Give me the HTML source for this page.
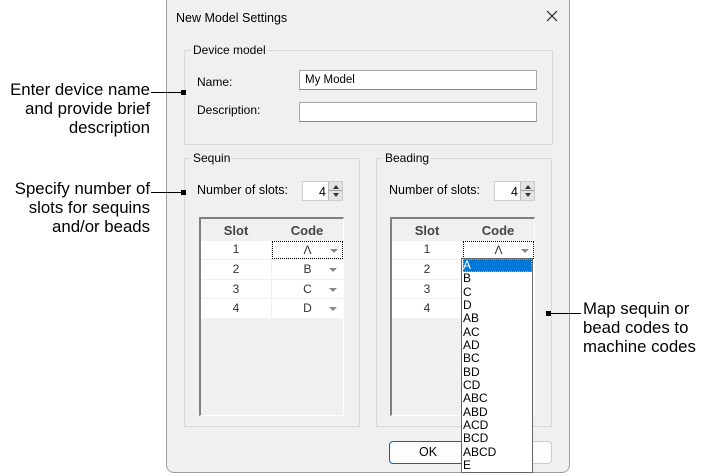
<!DOCTYPE html>
<html><head><style>
*{margin:0;padding:0;box-sizing:border-box}
body{width:706px;height:476px;background:#fff;position:relative;overflow:hidden;font-family:"Liberation Sans",Arial,sans-serif;}
.a{position:absolute}
.ann{position:absolute;font-size:16.8px;line-height:19px;color:#000}
.dlg{position:absolute;left:166px;top:0;width:404px;height:473px;background:#f0f0f0;border:1px solid #a0a0a0;border-top:none;border-radius:0 0 8px 8px}
.in{position:absolute;left:-1px;top:0;width:404px;height:473px}
.t{font-size:12px;color:#000;position:absolute;white-space:nowrap}
.grp{position:absolute;border:1px solid #d8d8d8}
.gl{position:absolute;background:#f0f0f0;padding:0 2px;font-size:12px;top:-8px;left:6px}
.inp{position:absolute;background:#fff;border:1px solid #a8a8a8;border-bottom-color:#888}
.grid{position:absolute;background:#f0f0f0;border-top:2px solid #808080;border-left:2px solid #808080;border-right:1px solid #fff;border-bottom:1px solid #fff}
.cell{position:absolute;background:#fff;font-size:12px;text-align:center;color:#333}
.hdr{position:absolute;font-size:13px;font-weight:bold;color:#444;text-align:center}
.arr{position:absolute;width:0;height:0;border-left:4px solid transparent;border-right:4px solid transparent;border-top:4px solid #888}
.ln{z-index:5}
</style></head><body>
<div class="ann" style="right:556px;top:80px;text-align:right">Enter device name<br>and provide brief<br>description</div>
<div class="ann" style="right:556px;top:179px;text-align:right">Specify number of<br>slots for sequins<br>and/or beads</div>
<div class="ann" style="left:583px;top:299px">Map sequin or<br>bead codes to<br>machine codes</div>

<div class="dlg"><div class="in">
<div class="t" style="left:10px;top:11px;font-size:12.5px">New Model Settings</div>
<svg class="a" style="left:380px;top:10px" width="12" height="12"><path d="M1 1L11 11M11 1L1 11" stroke="#222" stroke-width="1.2"/></svg>

<div class="grp" style="left:18px;top:50px;width:369px;height:95px"><div class="gl">Device model</div></div>
<div class="t" style="left:31px;top:75px">Name:</div>
<div class="inp" style="left:133px;top:70px;width:238px;height:20px"><span class="t" style="left:5px;top:3px;font-size:11.5px">My Model</span></div>
<div class="t" style="left:31px;top:103px">Description:</div>
<div class="inp" style="left:133px;top:102px;width:238px;height:20px"></div>

<div class="grp" style="left:18px;top:158px;width:176px;height:269px"><div class="gl">Sequin</div></div>
<div class="grp" style="left:210px;top:158px;width:176px;height:269px"><div class="gl">Beading</div></div>

<div class="t" style="left:31px;top:183px;font-size:12.5px">Number of slots:</div>
<div class="inp" style="left:136px;top:181px;width:41px;height:20px;border-color:#ccc"><span class="t" style="right:16px;top:3px;font-size:12.5px">4</span>
<div class="a" style="right:0;top:0;width:14px;height:18px;background:#e4e4e4;border-left:1px solid #bbb"><div class="a" style="left:0;top:8px;width:13px;height:1px;background:#999"></div><svg class="a" style="left:3px;top:1px" width="8" height="16"><path d="M4 2L7 6H1Z M1 10H7L4 14Z" fill="#333"/></svg></div></div>
<div class="grid" style="left:33px;top:217px;width:145px;height:199px">
<div class="hdr" style="left:0;top:4px;width:70px">Slot</div><div class="hdr" style="left:70px;top:4px;width:72px">Code</div>
<div class="cell" style="left:0;top:22px;width:70px;height:18px;line-height:17px">1</div>
<div class="cell" style="left:71px;top:22px;width:71px;height:18px;line-height:17px;border:1px dotted #000">Λ<div class="arr" style="left:57px;top:7px"></div></div>
<div class="cell" style="left:0;top:41px;width:70px;height:19px;line-height:19px">2</div><div class="cell" style="left:71px;top:41px;width:71px;height:19px;line-height:19px">B<div class="arr" style="left:57px;top:8px"></div></div>
<div class="cell" style="left:0;top:61px;width:70px;height:18px;line-height:18px">3</div><div class="cell" style="left:71px;top:61px;width:71px;height:18px;line-height:18px">C<div class="arr" style="left:57px;top:8px"></div></div>
<div class="cell" style="left:0;top:80px;width:70px;height:19px;line-height:19px">4</div><div class="cell" style="left:71px;top:80px;width:71px;height:19px;line-height:19px">D<div class="arr" style="left:57px;top:8px"></div></div>
</div>

<div class="t" style="left:223px;top:183px;font-size:12.5px">Number of slots:</div>
<div class="inp" style="left:328px;top:181px;width:41px;height:20px;border-color:#ccc"><span class="t" style="right:16px;top:3px;font-size:12.5px">4</span>
<div class="a" style="right:0;top:0;width:14px;height:18px;background:#e4e4e4;border-left:1px solid #bbb"><div class="a" style="left:0;top:8px;width:13px;height:1px;background:#999"></div><svg class="a" style="left:3px;top:1px" width="8" height="16"><path d="M4 2L7 6H1Z M1 10H7L4 14Z" fill="#333"/></svg></div></div>
<div class="grid" style="left:224px;top:217px;width:145px;height:199px">
<div class="hdr" style="left:0;top:4px;width:70px">Slot</div><div class="hdr" style="left:70px;top:4px;width:72px">Code</div>
<div class="cell" style="left:0;top:22px;width:70px;height:18px;line-height:17px">1</div>
<div class="cell" style="left:71px;top:22px;width:71px;height:18px;line-height:17px;border:1px dotted #000">Λ<div class="arr" style="left:57px;top:7px"></div></div>
<div class="cell" style="left:0;top:41px;width:70px;height:19px;line-height:19px">2</div><div class="cell" style="left:71px;top:41px;width:71px;height:19px"></div>
<div class="cell" style="left:0;top:61px;width:70px;height:18px;line-height:18px">3</div><div class="cell" style="left:71px;top:61px;width:71px;height:18px"></div>
<div class="cell" style="left:0;top:80px;width:70px;height:19px;line-height:19px">4</div><div class="cell" style="left:71px;top:80px;width:71px;height:19px"></div>
</div>

<div class="a" style="left:223px;top:441px;width:78px;height:23px;border:1px solid #0067c0;border-radius:4px;background:#fdfdfd;text-align:center;line-height:21px;font-size:12.5px">OK</div>
<div class="a" style="left:300px;top:441px;width:86px;height:23px;border:1px solid #ccc;border-radius:4px;background:#fdfdfd"></div>

<div class="a" style="left:295px;top:258px;width:72px;height:215px;background:#fff;border:1px solid #666;font-size:12px;line-height:13.35px;color:#000;padding-left:1px">
<div style="background:#0078d7;color:#fff;outline:1px dotted #f90;outline-offset:-1px">A</div>
<div>B</div><div>C</div><div>D</div><div>AB</div><div>AC</div><div>AD</div><div>BC</div><div>BD</div><div>CD</div><div>ABC</div><div>ABD</div><div>ACD</div><div>BCD</div><div>ABCD</div><div>E</div>
</div>
</div></div>

<div class="a ln" style="left:151px;top:92px;width:35px;height:1px;background:#000"></div>
<div class="a ln" style="left:181px;top:90px;width:5px;height:5px;background:#000"></div>
<div class="a ln" style="left:151px;top:192px;width:35px;height:1px;background:#000"></div>
<div class="a ln" style="left:181px;top:190px;width:5px;height:5px;background:#000"></div>
<div class="a ln" style="left:546px;top:313px;width:35px;height:1px;background:#000"></div>
<div class="a ln" style="left:546px;top:311px;width:5px;height:5px;background:#000"></div>
</body></html>
